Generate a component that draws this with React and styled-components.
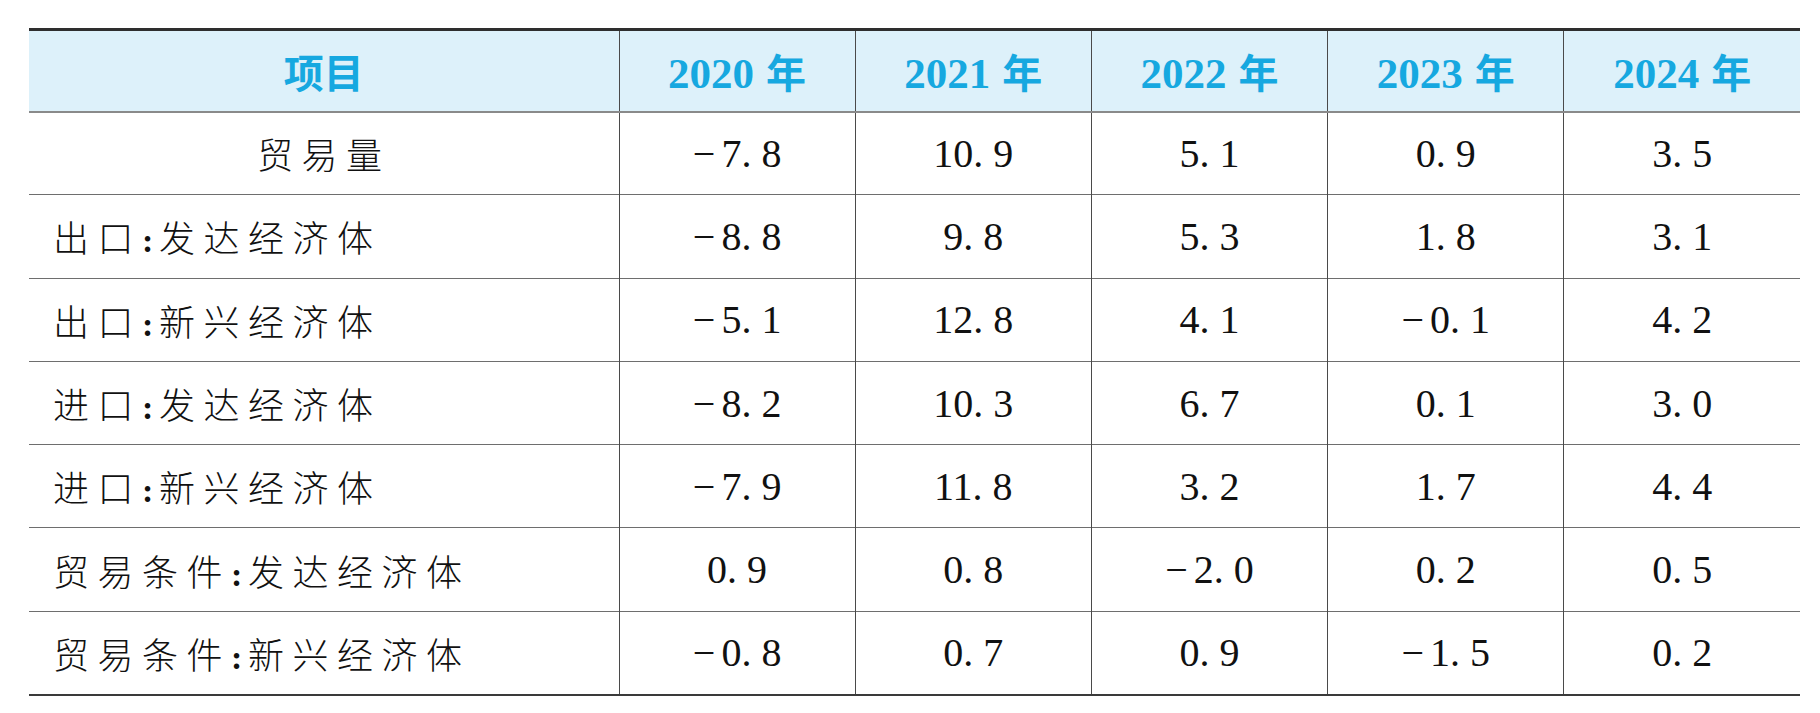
import React from "react";
import styled, { createGlobalStyle } from "styled-components";

const GlobalStyle = createGlobalStyle`
  html, body {
    margin: 0;
    padding: 0;
    background: #ffffff;
  }
`;

const SERIF = `"Liberation Serif", "Times New Roman", Tinos, Times, "DejaVu Serif", serif`;

const Page = styled.div`
  padding: 28px 0 0 29px;
  width: 1820px;
  height: 713px;
  box-sizing: border-box;
  background: #ffffff;
`;

const Table = styled.table`
  border-collapse: collapse;
  table-layout: fixed;
  width: 1771px;
  border-top: 3px solid #2e2e2e;
  border-bottom: 2px solid #3a3a3a;
`;

const HeadRow = styled.tr`
  height: 82px;
  background: #ddf1fa;
  border-bottom: 2px solid #8a8a8a;
`;

const BodyRow = styled.tr`
  height: 83.3px;
  border-bottom: ${(p) => (p.$last ? "none" : "1.5px solid #6e6e6e")};
`;

const HeadCell = styled.th`
  padding: 0;
  text-align: center;
  vertical-align: middle;
  color: #16a8e0;
  font-family: "Noto Sans CJK SC", sans-serif;
  font-weight: 700;
  font-size: 40px;
  border-left: ${(p) => (p.$first ? "none" : "1.5px solid #4a4a4a")};
`;

const Year = styled.span`
  font-family: ${SERIF};
  font-weight: 700;
  font-size: 43px;
  margin-right: 12px;
`;

const LabelCell = styled.td`
  padding: 0 0 0 ${(p) => (p.$center ? "0" : "24px")};
  text-align: ${(p) => (p.$center ? "center" : "left")};
  vertical-align: middle;
  font-family: "Noto Sans CJK SC", sans-serif;
  font-weight: 300;
  font-size: 36px;
  letter-spacing: 8.5px;
  color: #111111;
  white-space: nowrap;
`;

const Colon = styled.span`
  display: inline-block;
  width: 17px;
  font-family: ${SERIF};
  font-weight: 700;
  font-size: 34px;
  letter-spacing: 0;
  text-align: left;
`;

const NumCell = styled.td`
  padding: 0;
  text-align: center;
  vertical-align: middle;
  font-family: ${SERIF};
  font-size: 40px;
  color: #111111;
  border-left: 1.5px solid #4a4a4a;
  white-space: nowrap;
`;

const Minus = styled.span`
  margin-right: 6px;
`;

const years = ["2020", "2021", "2022", "2023", "2024"];

const rows = [
  { label: ["贸易量"], center: true, values: ["−7.8", "10.9", "5.1", "0.9", "3.5"] },
  { label: ["出口", "发达经济体"], values: ["−8.8", "9.8", "5.3", "1.8", "3.1"] },
  { label: ["出口", "新兴经济体"], values: ["−5.1", "12.8", "4.1", "−0.1", "4.2"] },
  { label: ["进口", "发达经济体"], values: ["−8.2", "10.3", "6.7", "0.1", "3.0"] },
  { label: ["进口", "新兴经济体"], values: ["−7.9", "11.8", "3.2", "1.7", "4.4"] },
  { label: ["贸易条件", "发达经济体"], values: ["0.9", "0.8", "−2.0", "0.2", "0.5"] },
  { label: ["贸易条件", "新兴经济体"], values: ["−0.8", "0.7", "0.9", "−1.5", "0.2"] },
];

function Num({ value }) {
  const neg = value.startsWith("−");
  const body = (neg ? value.slice(1) : value).replace(".", ". ");
  return (
    <>
      {neg && <Minus>−</Minus>}
      {body}
    </>
  );
}

export default function App() {
  return (
    <>
      <GlobalStyle />
      <Page>
        <Table>
          <colgroup>
            <col style={{ width: "590px" }} />
            {years.map((y) => (
              <col key={y} style={{ width: "236.2px" }} />
            ))}
          </colgroup>
          <thead>
            <HeadRow>
              <HeadCell $first>项目</HeadCell>
              {years.map((y) => (
                <HeadCell key={y}>
                  <Year>{y}</Year>年
                </HeadCell>
              ))}
            </HeadRow>
          </thead>
          <tbody>
            {rows.map((r, i) => (
              <BodyRow key={i} $last={i === rows.length - 1}>
                <LabelCell $center={r.center}>
                  {r.label.length === 1 ? (
                    r.label[0]
                  ) : (
                    <>
                      {r.label[0]}
                      <Colon>:</Colon>
                      {r.label[1]}
                    </>
                  )}
                </LabelCell>
                {r.values.map((v, j) => (
                  <NumCell key={j}>
                    <Num value={v} />
                  </NumCell>
                ))}
              </BodyRow>
            ))}
          </tbody>
        </Table>
      </Page>
    </>
  );
}
